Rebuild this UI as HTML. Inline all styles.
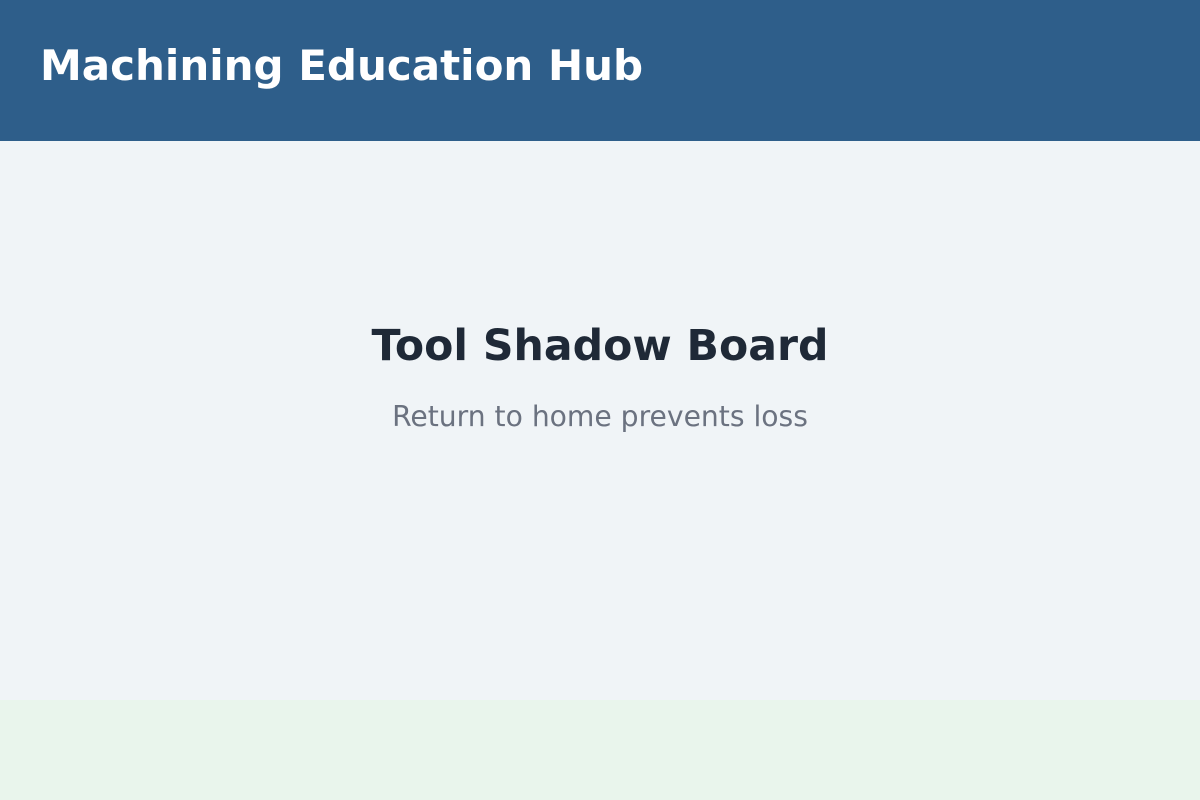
<!DOCTYPE html>
<html><head><meta charset="utf-8"><style>
html,body{margin:0;padding:0;width:1200px;height:800px;overflow:hidden;font-family:"DejaVu Sans","Liberation Sans",sans-serif;background:#f0f4f7}
.h{position:absolute;left:0;top:0;width:1200px;height:141px;background:#2e5e8a}
.h div{position:absolute;left:40px;top:40px;color:#fff;font-weight:bold;font-size:42px;line-height:52px;white-space:nowrap}
.t{position:absolute;left:0;width:1200px;text-align:center;top:320px;font-weight:bold;font-size:42.6px;line-height:52px;color:#1f2937}
.s{position:absolute;left:0;width:1200px;text-align:center;top:399px;font-size:28.2px;line-height:36px;color:#6b7280}
.f{position:absolute;left:0;top:700px;width:1200px;height:100px;background:#e9f5ec}
</style></head><body>
<div class="h"><div>Machining Education Hub</div></div>
<div class="t">Tool Shadow Board</div>
<div class="s">Return to home prevents loss</div>
<div class="f"></div>
</body></html>
